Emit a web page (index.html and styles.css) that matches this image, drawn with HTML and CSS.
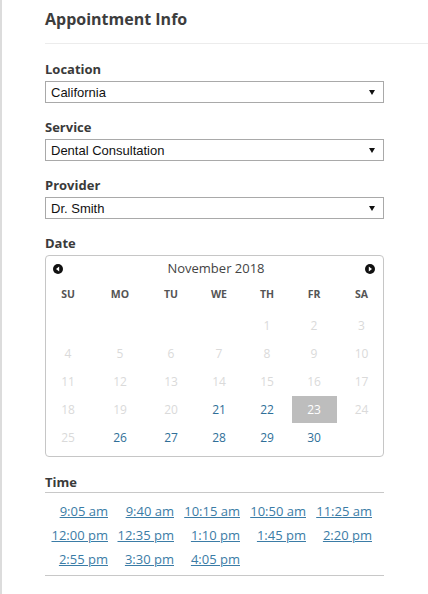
FILE: index.html
```html
<!DOCTYPE html>
<html>
<head>
<meta charset="utf-8">
<link rel="stylesheet" href="styles.css">
</head>
<body>
<div class="page">
  <h1 class="title">Appointment Info</h1>
  <div class="rule"></div>
  <div class="form">
    <div class="field">
      <div class="label">Location</div>
      <div class="select"><span>California</span><svg class="caret" width="6" height="5" viewBox="0 0 6 5"><path d="M0 0H6L3 5Z" fill="#111"/></svg></div>
    </div>
    <div class="field">
      <div class="label">Service</div>
      <div class="select"><span>Dental Consultation</span><svg class="caret" width="6" height="5" viewBox="0 0 6 5"><path d="M0 0H6L3 5Z" fill="#111"/></svg></div>
    </div>
    <div class="field">
      <div class="label">Provider</div>
      <div class="select"><span>Dr. Smith</span><svg class="caret" width="6" height="5" viewBox="0 0 6 5"><path d="M0 0H6L3 5Z" fill="#111"/></svg></div>
    </div>
    <div class="field">
      <div class="label">Date</div>
      <div class="calendar">
        <div class="cal-head">
          <svg class="nav" width="10" height="10" viewBox="0 0 10 10"><circle cx="5" cy="5" r="5" fill="#111"/><path d="M6.2 2.6V7.4L3 5Z" fill="#fff"/></svg>
          <span class="month">November 2018</span>
          <svg class="nav" width="10" height="10" viewBox="0 0 10 10"><circle cx="5" cy="5" r="5" fill="#111"/><path d="M3.8 2.6V7.4L7 5Z" fill="#fff"/></svg>
        </div>
        <div class="grid dow">
          <span>SU</span><span>MO</span><span>TU</span><span>WE</span><span>TH</span><span>FR</span><span>SA</span>
        </div>
        <div class="grid days">
          <span></span><span></span><span></span><span></span><span class="off">1</span><span class="off">2</span><span class="off">3</span>
          <span class="off">4</span><span class="off">5</span><span class="off">6</span><span class="off">7</span><span class="off">8</span><span class="off">9</span><span class="off">10</span>
          <span class="off">11</span><span class="off">12</span><span class="off">13</span><span class="off">14</span><span class="off">15</span><span class="off">16</span><span class="off">17</span>
          <span class="off">18</span><span class="off">19</span><span class="off">20</span><span class="on">21</span><span class="on">22</span><span class="sel"><b>23</b></span><span class="off">24</span>
          <span class="off">25</span><span class="on">26</span><span class="on">27</span><span class="on">28</span><span class="on">29</span><span class="on">30</span><span></span>
        </div>
      </div>
    </div>
    <div class="time">
      <div class="label">Time</div>
      <div class="times">
        <a href="#">9:05 am</a><a href="#">9:40 am</a><a href="#">10:15 am</a><a href="#">10:50 am</a><a href="#">11:25 am</a>
        <a href="#">12:00 pm</a><a href="#">12:35 pm</a><a href="#">1:10 pm</a><a href="#">1:45 pm</a><a href="#">2:20 pm</a>
        <a href="#">2:55 pm</a><a href="#">3:30 pm</a><a href="#">4:05 pm</a>
      </div>
    </div>
  </div>
</div>
</body>
</html>
```

FILE: styles.css
```css
html, body {
  margin: 0;
  padding: 0;
  background: #fff;
}
body {
  font-family: "Open Sans", "DejaVu Sans", sans-serif;
  color: #333;
}
.page {
  border-left: 2px solid #dcdcdc;
  margin-left: 0;
  padding-left: 43px;
  min-height: 594px;
  box-sizing: border-box;
}
.title {
  margin: 0;
  padding-top: 7px;
  font-size: 16px;
  line-height: 24px;
  font-weight: 700;
  color: #3d3d3d;
}
.rule {
  margin-top: 12px;
  border-top: 1px solid #ececec;
}
.form {
  width: 339px;
  padding-top: 16px;
}
.field {
  margin-bottom: 15px;
}
.label {
  font-size: 13px;
  line-height: 18px;
  font-weight: 700;
  color: #3a3a3a;
  margin-bottom: 3px;
}
.select {
  height: 22px;
  box-sizing: border-box;
  border: 1px solid #a9a9a9;
  display: flex;
  align-items: center;
  justify-content: space-between;
  padding: 0 8px 0 5px;
  font-family: "Liberation Sans", Arial, sans-serif;
  font-size: 13px;
  color: #111;
  background: #fff;
}
.caret {
  display: block;
}
.calendar {
  border: 1px solid #c6c6c6;
  border-radius: 4px;
  height: 202px;
  box-sizing: border-box;
}
.cal-head {
  height: 24px;
  display: flex;
  align-items: center;
  justify-content: space-between;
  padding: 0 8px 0 7px;
  box-sizing: border-box;
}
.nav {
  display: block;
  margin-top: 2px;
}
.month {
  font-size: 13px;
  color: #444;
  margin-left: 4px;
}
.grid {
  display: grid;
  grid-template-columns: 42px 62px 40px 56px 40px 54px 41px;
  padding-left: 1px;
}
.dow span {
  height: 28px;
  display: flex;
  align-items: center;
  justify-content: center;
  font-size: 10.5px;
  font-weight: 700;
  color: #555;
}
.days {
  padding-top: 3px;
}
.days span {
  height: 28px;
  display: flex;
  align-items: center;
  justify-content: center;
  font-size: 12px;
}
.days .off {
  color: #dadada;
}
.days .on {
  color: #2f6f98;
}
.days .sel b {
  font-weight: 400;
  width: 45px;
  height: 27px;
  background: #bdbdbd;
  color: #fff;
  display: flex;
  align-items: center;
  justify-content: center;
}
.time {
  padding-top: 1px;
}
.time .label {
  margin-bottom: 1px;
}
.times {
  border-top: 1px solid #c8c8c8;
  border-bottom: 1px solid #c8c8c8;
  display: grid;
  grid-template-columns: repeat(5, 66px);
  padding: 6px 0 4px;
}
.times a {
  justify-self: end;
  margin-right: 3px;
  font-size: 13px;
  line-height: 24px;
  color: #3b7ca6;
  text-decoration: underline;
}
```
